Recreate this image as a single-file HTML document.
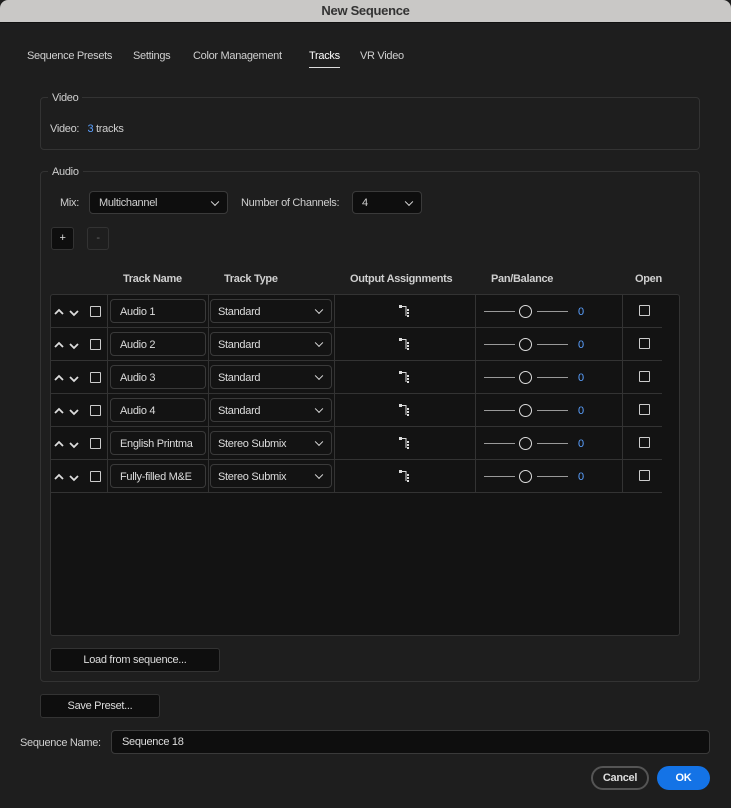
<!DOCTYPE html>
<html><head><meta charset="utf-8"><style>
*{box-sizing:border-box;margin:0;padding:0}
body{width:731px;height:808px;background:#1e1e1e;font-family:"Liberation Sans",sans-serif;font-size:11px;letter-spacing:-0.3px;color:#d0d0d0;position:relative;overflow:hidden}
.a{position:absolute}
.title{left:0;top:0;width:731px;height:23px;background:#c9c8c6;color:#333;font-weight:bold;font-size:13px;text-align:center;line-height:21px;border-bottom:1px solid #111;border-radius:8px 8px 0 0}
.tab{top:50px;font-size:11px;color:#cfcfcf}
.grp{border:1px solid #333;border-radius:4px}
.lbl{font-size:11px;color:#cfcfcf}
.field{background:#0e0e0e;border:1px solid #3a3a3a;border-radius:4px}
.btn{background:#0e0e0e;border:1px solid #333;border-radius:3px;text-align:center;color:#ddd}
.chev{position:absolute;right:9px;top:50%;width:6px;height:6px;border-right:1.6px solid #ddd;border-bottom:1.6px solid #ddd;transform:translateY(-70%) rotate(45deg)}
.hd{top:273px;font-weight:bold;color:#cfcfcf;font-size:11px}
.row{position:absolute;left:51px;width:611px;height:33px;border-bottom:1px solid #333}
.cb{position:absolute;width:11px;height:11px;border:1.6px solid #ccc;border-radius:1px}
.vl{position:absolute;top:0;width:1px;height:33px;background:#333}
</style></head><body>
<div class="a title">New Sequence</div>
<div class="a tab" style="left:27px">Sequence Presets</div>
<div class="a tab" style="left:133px">Settings</div>
<div class="a tab" style="left:193px">Color Management</div>
<div class="a tab" style="left:309px;color:#fff">Tracks</div>
<div class="a" style="left:309px;top:67px;width:31px;height:1px;background:#ddd"></div>
<div class="a tab" style="left:360px">VR Video</div>

<div class="a grp" style="left:40px;top:97px;width:660px;height:53px"></div>
<div class="a lbl" style="left:48px;top:92px;background:#1e1e1e;padding:0 4px">Video</div>
<div class="a lbl" style="left:50px;top:123px">Video:&nbsp;&nbsp; <span style="color:#5aa0ff">3</span> tracks</div>

<div class="a grp" style="left:40px;top:171px;width:660px;height:511px"></div>
<div class="a lbl" style="left:48px;top:166px;background:#1e1e1e;padding:0 4px">Audio</div>
<div class="a lbl" style="left:60px;top:197px">Mix:</div>
<div class="a field" style="left:89px;top:191px;width:139px;height:23px;padding:5px 9px">Multichannel<span class="chev"></span></div>
<div class="a lbl" style="left:241px;top:197px">Number of Channels:</div>
<div class="a field" style="left:352px;top:191px;width:70px;height:23px;padding:5px 9px">4<span class="chev"></span></div>
<div class="a btn" style="left:51px;top:227px;width:23px;height:23px;line-height:21px">+</div>
<div class="a btn" style="left:87px;top:227px;width:22px;height:23px;line-height:20px;background:#1e1e1e;color:#666">-</div>

<div class="a hd" style="left:123px">Track Name</div>
<div class="a hd" style="left:224px">Track Type</div>
<div class="a hd" style="left:350px">Output Assignments</div>
<div class="a hd" style="left:491px">Pan/Balance</div>
<div class="a hd" style="left:635px">Open</div>

<div class="a" style="left:50px;top:294px;width:630px;height:342px;background:#131313;border:1px solid #333;border-radius:3px"></div>

<div id="rows"></div>
<script>
var names=["Audio 1","Audio 2","Audio 3","Audio 4","English Printma","Fully-filled M&amp;E"];
var types=["Standard","Standard","Standard","Standard","Stereo Submix","Stereo Submix"];
var h="";
for(var i=0;i<6;i++){
var t=295+33*i;
h+='<div class="row" style="top:'+t+'px">'+
'<svg style="position:absolute;left:2px;top:12px" width="30" height="10"><path d="M2 7 L6 3 L10 7 M17 4 L21 8 L25 4" stroke="#ddd" stroke-width="1.8" fill="none"/></svg>'+
'<div class="cb" style="left:39px;top:11px"></div>'+
'<div class="vl" style="left:56px"></div><div class="vl" style="left:157px"></div><div class="vl" style="left:283px"></div><div class="vl" style="left:424px"></div><div class="vl" style="left:571px"></div>'+
'<div class="field" style="position:absolute;left:59px;top:4px;width:96px;height:24px;padding:6px 9px;background:#131313;color:#ddd;white-space:nowrap;overflow:hidden">'+names[i]+'</div>'+
'<div class="field" style="position:absolute;left:159px;top:4px;width:122px;height:24px;padding:6px 7px;background:#131313;color:#ddd">'+types[i]+'<span class="chev"></span></div>'+
'<svg style="position:absolute;left:345px;top:9px" width="16" height="16"><rect x="3" y="1" width="3" height="3" fill="#ddd"/><path d="M6 2.5 H10 V12" stroke="#ddd" stroke-width="1" fill="none"/><rect x="11" y="5" width="2" height="2" fill="#ddd"/><rect x="11" y="8" width="2" height="2" fill="#ddd"/><rect x="11" y="11" width="2" height="2" fill="#ddd"/></svg>'+
'<div style="position:absolute;left:433px;top:16px;width:31px;height:1px;background:#999"></div>'+
'<div style="position:absolute;left:468px;top:10px;width:13px;height:13px;border:1.6px solid #ddd;border-radius:50%"></div>'+
'<div style="position:absolute;left:486px;top:16px;width:31px;height:1px;background:#999"></div>'+
'<div style="position:absolute;left:527px;top:11px;color:#5aa0ff">0</div>'+
'<div class="cb" style="left:588px;top:10px"></div>'+
'</div>';}
document.getElementById("rows").innerHTML=h;
</script>

<div class="a btn" style="left:50px;top:648px;width:170px;height:24px;line-height:22px">Load from sequence...</div>
<div class="a btn" style="left:40px;top:694px;width:120px;height:24px;line-height:22px">Save Preset...</div>
<div class="a lbl" style="left:20px;top:737px">Sequence Name:</div>
<div class="a field" style="left:111px;top:730px;width:599px;height:24px;padding:5px 10px;color:#ddd">Sequence 18</div>
<div class="a" style="left:591px;top:766px;width:58px;height:24px;border:2px solid #555;border-radius:12px;text-align:center;line-height:20px;color:#ddd;font-weight:bold">Cancel</div>
<div class="a" style="left:657px;top:766px;width:53px;height:24px;background:#1473e6;border-radius:12px;text-align:center;line-height:24px;color:#fff;font-weight:bold">OK</div>
</body></html>
